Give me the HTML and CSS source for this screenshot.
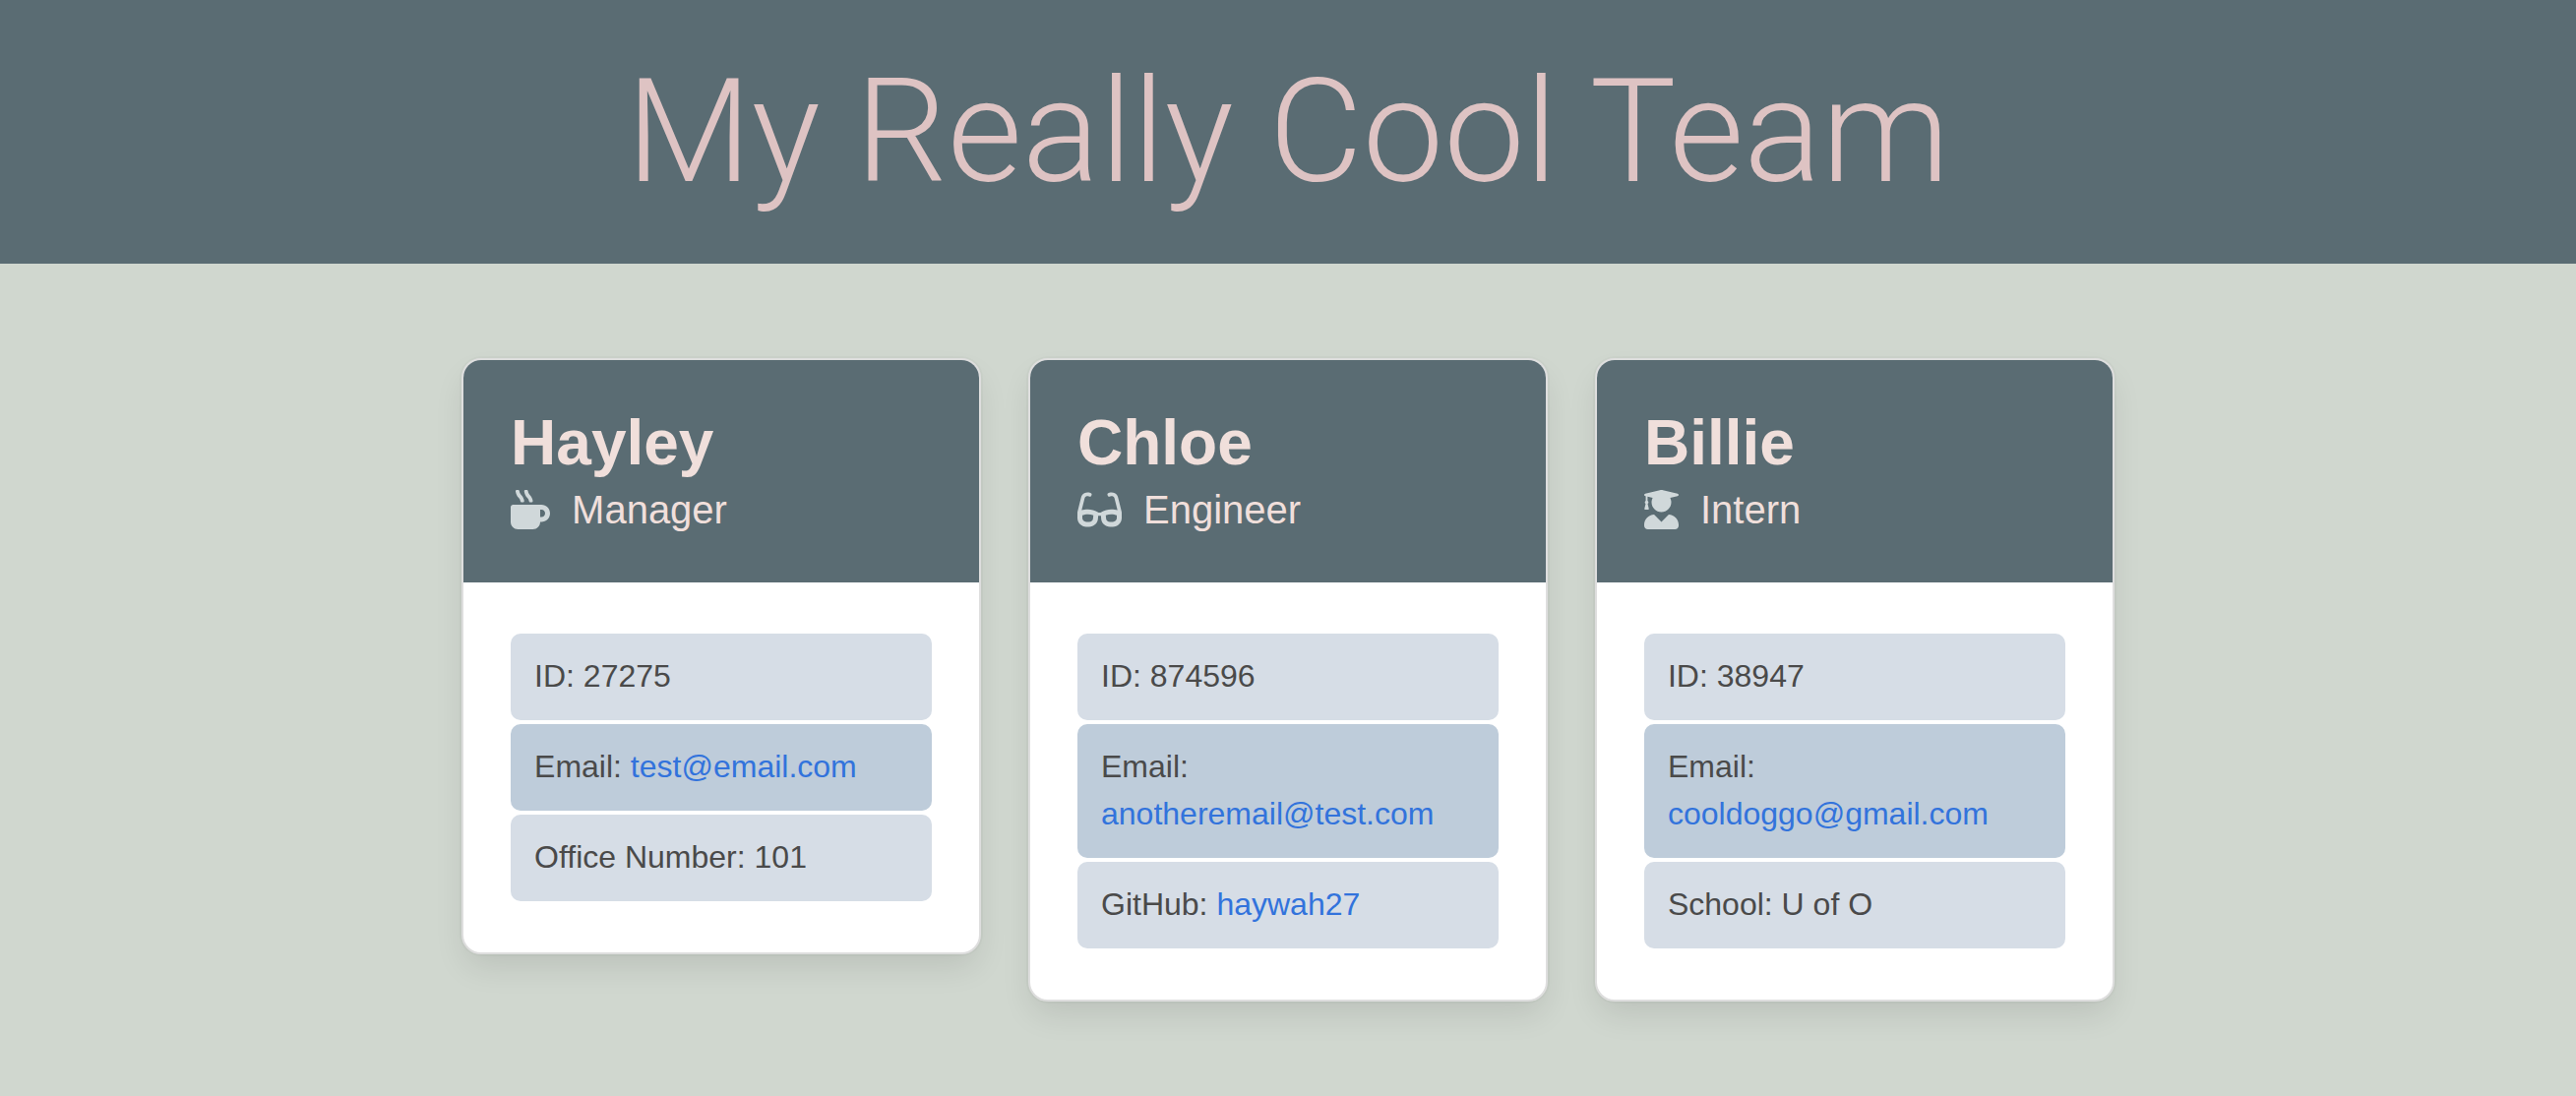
FILE: index.html
```html
<!DOCTYPE html>
<html lang="en">
<head>
<meta charset="utf-8">
<meta name="viewport" content="width=device-width, initial-scale=1">
<title>My Really Cool Team</title>
<link rel="stylesheet" href="styles.css">
</head>
<body>
<header class="hero">
  <h1 class="hero-title">My Really Cool Team</h1>
</header>
<main class="team">
  <article class="card">
    <header class="card-top">
      <h2 class="name">Hayley</h2>
      <p class="role">
        <svg class="icon icon-mug" viewBox="0 0 512 512" aria-hidden="true"><path d="M127.100 146.500c1.300 7.700 8 13.500 16 13.500h16.500c9.800 0 17.600-8.500 16.300-18-3.800-28.200-16.400-54.200-36.600-74.700-14.400-14.700-23.600-33.300-26.400-53.500C111.800 5.900 105 0 96.800 0H80.400C70.600 0 63 8.500 64.100 18c3.900 31.900 18 61.300 40.600 84.400 12 12.200 19.700 27.500 22.400 44.100zm112 0c1.300 7.700 8 13.500 16 13.500h16.500c9.800 0 17.600-8.500 16.300-18-3.800-28.200-16.400-54.200-36.600-74.700-14.400-14.700-23.600-33.300-26.400-53.500C223.800 5.900 217 0 208.800 0h-16.400c-9.800 0-17.500 8.500-16.300 18 3.900 31.900 18 61.300 40.600 84.400 12 12.200 19.700 27.500 22.400 44.100zM400 192H32c-17.700 0-32 14.300-32 32v192c0 53 43 96 96 96h192c53 0 96-43 96-96h16c61.800 0 112-50.200 112-112s-50.200-112-112-112zm0 160h-16v-96h16c26.500 0 48 21.500 48 48s-21.500 48-48 48z"/></svg>
        <span>Manager</span>
      </p>
    </header>
    <ul class="facts">
      <li class="fact">ID: 27275</li>
      <li class="fact">Email: <a href="mailto:test@email.com">test@email.com</a></li>
      <li class="fact">Office Number: 101</li>
    </ul>
  </article>
  <article class="card">
    <header class="card-top">
      <h2 class="name">Chloe</h2>
      <p class="role">
        <svg class="icon icon-glasses" viewBox="0 0 576 512" aria-hidden="true"><path d="M574.100 280.400L528.800 98.700c-5.900-23.700-21.600-44.100-43-55.800-21.400-11.700-46.900-14.100-70.200-6.300l-15.200 5.100c-8.400 2.800-12.900 11.900-10.100 20.200l5.100 15.200c2.800 8.400 11.900 12.900 20.200 10.100l13.200-4.400c10.900-3.600 23-3.600 33.200 1.700 10.300 5.300 17.600 14.300 20.400 25.500l38.500 153.900c-22.200-6.800-49.500-12.500-80.500-12.500-42.100 0-91 10.300-139.700 41.600h-25.500c-48.700-31.300-97.600-41.600-139.700-41.600-31 0-58.300 5.700-80.500 12.500L93.500 110.100c2.800-11.200 10.100-20.200 20.400-25.500 10.200-5.300 22.300-5.300 33.200-1.700l13.200 4.400c8.400 2.800 17.400-1.700 20.200-10.100l5.100-15.200c2.800-8.400-1.700-17.400-10.100-20.200l-15.200-5.100c-23.300-7.800-48.800-5.400-70.200 6.300-21.400 11.700-37.100 32.200-43 55.800L1.900 280.400A64 64 0 0 0 0 295.900v70.300C0 429 51.600 480 115.200 480h37.100c60.300 0 110.400-45.900 114.900-105.400l2.900-38.600h35.900l2.900 38.600C313.300 434.100 363.400 480 423.700 480h37.100C524.400 480 576 429 576 366.100v-70.300c0-5.200-.6-10.400-1.900-15.400zM203.400 369.700c-2 26-24.400 46.300-51.100 46.300h-37.100C87 416 64 393.600 64 366.100v-37.500c18.100-6.500 43.400-12.900 72.700-12.900 23.600 0 47.300 4.300 70.500 12.800zM512 366.100c0 27.500-23 49.900-51.200 49.900h-37.100c-26.700 0-49.100-20.300-51.100-46.300l-3.800-41.200c23.200-8.500 46.900-12.800 70.500-12.800 29.400 0 54.600 6.500 72.700 12.900z"/></svg>
        <span>Engineer</span>
      </p>
    </header>
    <ul class="facts">
      <li class="fact">ID: 874596</li>
      <li class="fact">Email: <a href="mailto:anotheremail@test.com">anotheremail@test.com</a></li>
      <li class="fact">GitHub: <a href="https://github.com/haywah27">haywah27</a></li>
    </ul>
  </article>
  <article class="card">
    <header class="card-top">
      <h2 class="name">Billie</h2>
      <p class="role">
        <svg class="icon icon-graduate" viewBox="0 0 448 512" aria-hidden="true"><path d="M319.400 320.600L224 416l-95.400-95.400C57.100 323.700 0 382.200 0 454.400v9.600c0 26.500 21.500 48 48 48h352c26.500 0 48-21.500 48-48v-9.600c0-72.200-57.100-130.700-128.600-133.800zM13.600 79.800l6.400 1.500v58.400c-7 4.200-12 11.500-12 20.300 0 8.400 4.600 15.400 11.100 19.700L3.500 242c-1.700 6.900 2.100 14 7.600 14h41.800c5.500 0 9.300-7.100 7.600-14l-15.600-62.300C51.400 175.400 56 168.400 56 160c0-8.800-5-16.100-12-20.300V87.100l66 15.900c-8.600 17.200-14 36.400-14 57 0 70.700 57.300 128 128 128s128-57.300 128-128c0-20.600-5.300-39.800-14-57l96.300-23.200c18.200-4.400 18.200-27.100 0-31.500l-190.400-46c-13-3.100-26.700-3.100-39.700 0L13.600 48.200c-18.100 4.400-18.100 27.200 0 31.600z"/></svg>
        <span>Intern</span>
      </p>
    </header>
    <ul class="facts">
      <li class="fact">ID: 38947</li>
      <li class="fact">Email: <a href="mailto:cooldoggo@gmail.com">cooldoggo@gmail.com</a></li>
      <li class="fact">School: U of O</li>
    </ul>
  </article>
</main>
</body>
</html>
```
FILE: styles.css
```css
* {
  box-sizing: border-box;
}

body {
  margin: 0;
  background: #d0d7cf;
  color: #4a4a4a;
  font-family: "Liberation Sans", Arial, sans-serif;
  font-size: 32px;
  line-height: 48px;
}

h1, h2, p, ul {
  margin: 0;
  padding: 0;
}

a {
  color: #3273dc;
  text-decoration: none;
}

.hero {
  padding: 48px;
  background: #5a6c73;
  text-align: center;
}

.hero-title {
  color: #dec3c3;
  font-family: Roboto, sans-serif;
  font-size: 147px;
  font-weight: 300;
  line-height: 172px;
}

.team {
  display: grid;
  grid-template-columns: repeat(3, 1fr);
  align-items: start;
  gap: 48px;
  width: 66%;
  margin: 0 auto;
  padding: 96px 24px;
}

.card {
  overflow: hidden;
  border: 2px solid #dedede;
  border-radius: 20px;
  background: #fff;
  box-shadow: 0 16px 32px -4px rgba(10, 10, 10, 0.1), 0 0 0 2px rgba(10, 10, 10, 0.02);
}

.card-top {
  padding: 48px;
  background: #5a6c73;
  color: #f0dfdb;
}

.name {
  font-size: 64px;
  font-weight: 700;
  line-height: 72px;
}

.role {
  display: flex;
  align-items: center;
  gap: 22px;
  padding-top: 6px;
  font-size: 40px;
  line-height: 52px;
}

.icon {
  height: 40px;
  fill: #d0d8da;
}

.icon-mug {
  width: 40px;
}

.icon-glasses {
  width: 45px;
}

.icon-graduate {
  width: 35px;
}

.facts {
  display: grid;
  gap: 4px;
  padding: 52px 48px;
  list-style: none;
}

.fact {
  padding: 19px 24px 21px;
  border-radius: 10px;
  background: #d6dde6;
}

.fact:nth-child(even) {
  background: #beccda;
}
```
